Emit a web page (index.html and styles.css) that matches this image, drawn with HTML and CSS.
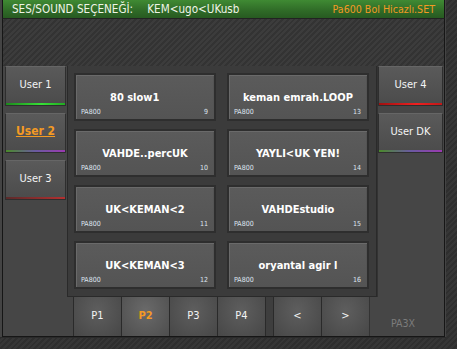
FILE: index.html
```html
<!DOCTYPE html>
<html lang="tr">

<head>
    <meta charset="UTF-8">
    <meta name="viewport" content="width=device-width, initial-scale=1.0">
    <title>Ses Seçeneği</title>
    <link rel="stylesheet" href="styles.css">
</head>

<body>
    <div class="window">
        <div class="header">
            <div class="header__left">
                <span class="header__label">SES/SOUND SEÇENEĞİ:</span>
                <span class="header__value">KEM&lt;ugo&lt;UKusb</span>
            </div>
            <div class="header__set">Pa600 Bol Hicazlı.SET</div>
        </div>
        <div class="stripes"></div>

        <div class="main">
            <div class="side">
                <button class="tab tab--green">User 1</button>
                <button class="tab tab--mix tab--active">User 2</button>
                <button class="tab tab--red">User 3</button>
            </div>

            <div class="content">
                <div class="upper">
                    <div class="panel">
                        <div class="sound">
                            <span class="sound__name">80 slow1      </span>
                            <span class="sound__bank">PA800</span><span class="sound__num">9</span>
                        </div>
                        <div class="sound">
                            <span class="sound__name">keman emrah.LOOP</span>
                            <span class="sound__bank">PA800</span><span class="sound__num">13</span>
                        </div>
                        <div class="sound">
                            <span class="sound__name">VAHDE..percUK</span>
                            <span class="sound__bank">PA800</span><span class="sound__num">10</span>
                        </div>
                        <div class="sound">
                            <span class="sound__name">YAYLI&lt;UK YEN!</span>
                            <span class="sound__bank">PA800</span><span class="sound__num">14</span>
                        </div>
                        <div class="sound">
                            <span class="sound__name">UK&lt;KEMAN&lt;2</span>
                            <span class="sound__bank">PA800</span><span class="sound__num">11</span>
                        </div>
                        <div class="sound">
                            <span class="sound__name">VAHDEstudio</span>
                            <span class="sound__bank">PA800</span><span class="sound__num">15</span>
                        </div>
                        <div class="sound">
                            <span class="sound__name">UK&lt;KEMAN&lt;3</span>
                            <span class="sound__bank">PA800</span><span class="sound__num">12</span>
                        </div>
                        <div class="sound">
                            <span class="sound__name">oryantal agir l</span>
                            <span class="sound__bank">PA800</span><span class="sound__num">16</span>
                        </div>
                    </div>

                    <div class="side side--right">
                        <button class="tab tab--bright-red">User 4</button>
                        <button class="tab tab--mix">User DK</button>
                    </div>
                </div>

                <div class="pager">
                    <button class="page">P1</button>
                    <button class="page page--active">P2</button>
                    <button class="page">P3</button>
                    <button class="page">P4</button>
                    <span class="pager__gap"></span>
                    <button class="page">&lt;</button>
                    <button class="page">&gt;</button>
                    <span class="pager__model">PA3X</span>
                </div>
            </div>
        </div>
    </div>
</body>

</html>
```

FILE: styles.css
```css
:root {
    --color-bg: #464646;
    --color-dark: #161616;
    --color-panel: #3b3b3b;
    --color-text: #f4f4f4;
    --color-orange: #f39a24;
}

body {
    margin: 0;
    height: 349px;
    font-family: 'DejaVu Sans Condensed', 'DejaVu Sans', sans-serif;
    font-size: 11px;
    color: var(--color-text);
    background:
        repeating-linear-gradient(-45deg, #363636 0, #363636 2px, #2e2e2e 2px, #2e2e2e 4px);
    overflow: hidden;
}

button {
    font-family: inherit;
    cursor: pointer;
}

.window {
    width: 446px;
    height: 338px;
    padding: 0 1px 0 2px;
    box-sizing: border-box;
    background-color: #444;
    border-bottom: 1px solid #2a2a2a;
}

.header {
    height: 18px;
    display: flex;
    justify-content: space-between;
    align-items: center;
    padding: 0 9px;
    background: linear-gradient(#3f8a33, #2f6a27 60%, #275a21);
    border-left: 1px solid var(--color-dark);
    border-right: 1px solid var(--color-dark);
    font-size: 11px;
}

.header__label {
    color: #eef4e6;
    font-size: 11.6px;
    margin-right: 11px;
}

.header__value {
    color: #eef4e6;
    font-size: 11.6px;
}

.header__set {
    color: var(--color-orange);
    font-size: 10.6px;
}

.stripes {
    height: 48px;
    box-sizing: border-box;
    border-left: 1px solid var(--color-dark);
    border-right: 1px solid var(--color-dark);
    border-top: 1px solid #222;
    background:
        repeating-linear-gradient(-45deg, #3c3c3c 0, #3c3c3c 2px, #333 2px, #333 4px);
}

.main {
    display: flex;
    height: 271px;
    box-sizing: border-box;
    border: 1px solid var(--color-dark);
    border-top: none;
    background-color: var(--color-bg);
}

.side {
    width: 64px;
    display: flex;
    flex-direction: column;
    gap: 7px;
    background-color: var(--color-bg);
}

.side > .tab {
    margin: 0 1px 0 2px;
}

.side--right {
    width: 65px;
    border-left: 1px solid #333;
}

.side--right > .tab {
    margin: 0;
}

.tab {
    height: 40px;
    border: 1px solid #2e2e2e;
    border-top-color: #666;
    background: linear-gradient(#5a5a5a, #4b4b4b);
    color: var(--color-text);
    font-size: 11px;
    padding: 0 0 4px;
    position: relative;
}

.tab::after {
    content: '';
    position: absolute;
    left: 0;
    right: 0;
    bottom: 0;
    height: 2px;
}

.tab--green::after {
    background: linear-gradient(90deg, #1c8a1c, #37e037 60%, #22aa22);
}

.tab--mix::after {
    background: linear-gradient(90deg, #4a8a2a, #6a5aa0 50%, #9a3ab0);
}

.tab--red::after {
    background: linear-gradient(90deg, #5a2a2a, #b43030);
}

.tab--bright-red::after {
    background: linear-gradient(90deg, #a01010, #f02020 60%, #c01818);
}

.tab--active {
    color: var(--color-orange);
    font-weight: bold;
    text-decoration: underline;
    font-size: 12px;
}

.content {
    flex: 1;
    display: flex;
    flex-direction: column;
}

.upper {
    display: flex;
    height: 231px;
}

.panel {
    width: 310px;
    box-sizing: border-box;
    display: grid;
    grid-template-columns: 142px 142px;
    grid-auto-rows: 48px;
    column-gap: 11px;
    row-gap: 8px;
    padding: 7px 7px 8px 6px;
    background-color: var(--color-panel);
    border: 1px solid #2a2a2a;
    border-top: none;
}

.sound {
    position: relative;
    box-sizing: border-box;
    border: 2px solid #2e2e2e;
    box-shadow: inset 1px 1px 0 #6a6a6a, inset -1px -1px 0 #545454;
    background: linear-gradient(#5b5b5b, #545454);
    display: flex;
    justify-content: center;
    padding-top: 16px;
}

.sound__name {
    font-weight: bold;
    font-size: 11px;
    color: #fff;
    white-space: pre;
}

.sound__bank,
.sound__num {
    position: absolute;
    bottom: 3px;
    font-size: 7px;
    color: #dfe6f0;
}

.sound__bank {
    left: 5px;
}

.sound__num {
    right: 6px;
}

.pager {
    flex: 1;
    display: flex;
    padding-left: 6px;
}

.page {
    width: 48px;
    border: none;
    border-left: 1px solid #2a2a2a;
    background: radial-gradient(ellipse at 50% 35%, #5e5e5e, #4e4e4e 70%, #474747);
    color: var(--color-text);
    font-size: 11px;
    padding: 0 0 2px;
}

.page--active {
    background: radial-gradient(ellipse at 50% 35%, #6a6a6a, #565656 70%, #4e4e4e);
    color: var(--color-orange);
    font-weight: bold;
}

.pager__gap {
    width: 7px;
    background-color: #3e3e3e;
    border-left: 1px solid #2a2a2a;
}

.pager__model {
    flex: 1;
    color: #7c7c7c;
    font-size: 10.5px;
    text-align: center;
    padding: 20px 8px 0 0;
    border-left: 1px solid #333;
}
```
